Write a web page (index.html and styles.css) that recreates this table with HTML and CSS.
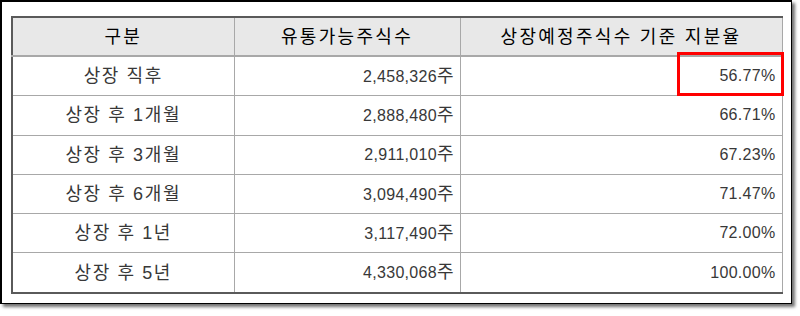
FILE: index.html
```html
<!DOCTYPE html>
<html lang="ko">
<head>
<meta charset="utf-8">
<link rel="stylesheet" href="styles.css">
</head>
<body>
<div class="frame">
  <table class="tbl">
    <colgroup>
      <col class="c1"><col class="c2"><col class="c3">
    </colgroup>
    <thead>
      <tr><th>구분</th><th>유통가능주식수</th><th>상장예정주식수 기준 지분율</th></tr>
    </thead>
    <tbody>
      <tr><td class="lbl">상장 직후</td><td class="num">2,458,326<span class="unit">주</span></td><td class="num"><span class="hl">56.77%</span></td></tr>
      <tr><td class="lbl">상장 후 1개월</td><td class="num">2,888,480<span class="unit">주</span></td><td class="num">66.71%</td></tr>
      <tr><td class="lbl">상장 후 3개월</td><td class="num">2,911,010<span class="unit">주</span></td><td class="num">67.23%</td></tr>
      <tr><td class="lbl">상장 후 6개월</td><td class="num">3,094,490<span class="unit">주</span></td><td class="num">71.47%</td></tr>
      <tr><td class="lbl">상장 후 1년</td><td class="num">3,117,490<span class="unit">주</span></td><td class="num">72.00%</td></tr>
      <tr><td class="lbl">상장 후 5년</td><td class="num">4,330,068<span class="unit">주</span></td><td class="num">100.00%</td></tr>
    </tbody>
  </table>
</div>
</body>
</html>
```

FILE: styles.css
```css
html, body {
  margin: 0;
  padding: 0;
  background: #ffffff;
}
body {
  font-family: "Liberation Sans", "Noto Sans CJK KR", sans-serif;
  width: 800px;
  height: 316px;
  overflow: hidden;
}
.frame {
  box-sizing: border-box;
  width: 792px;
  height: 304px;
  border: 2px solid #000;
  border-right-width: 1px;
  border-bottom-width: 1px;
  box-shadow: 3px 3px 3px rgba(0,0,0,0.55);
  padding: 14px 0 0 9px;
}
.tbl {
  border-collapse: collapse;
  width: 770px;
  table-layout: fixed;
  border-top: 2px solid #5a5a5a;
  border-left: 2px solid #5a5a5a;
  border-bottom: 2px solid #5a5a5a;
  border-right: 1px solid #9a9a9a;
}
.c1 { width: 222px; }
.c2 { width: 226px; }
.c3 { width: 322px; }
.tbl th, .tbl td {
  border: 1px solid #a8a8a8;
  font-weight: 400;
  padding: 0 6px;
  white-space: nowrap;
  line-height: 20px;
}
.tbl th {
  height: 37px;
  background: #e8e8e8;
  color: #000;
  border-bottom: 2px solid #a8a8a8;
  text-align: center;
  font-size: 18px;
  letter-spacing: 2.3px;
}
.tbl td {
  height: 38.3px;
  color: #383838;
}
.tbl td.lbl {
  text-align: center;
  font-size: 18px;
  letter-spacing: 1.6px;
}
.tbl td.num {
  text-align: right;
  position: relative;
  font-size: 16px;
  letter-spacing: 0.3px;
}
.unit {
  font-size: 18px;
  letter-spacing: 0;
}
.hl::after {
  content: "";
  position: absolute;
  left: 216px;
  right: -2px;
  top: -5px;
  bottom: -1px;
  border: 3px solid #ff0000;
}
```
